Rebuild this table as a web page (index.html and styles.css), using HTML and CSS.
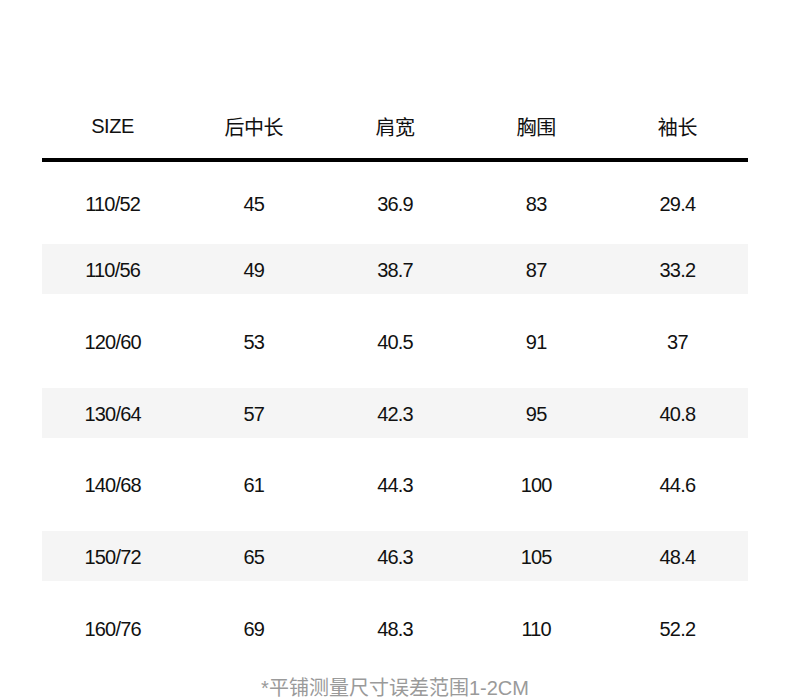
FILE: index.html
```html
<!DOCTYPE html>
<html lang="zh-CN">
<head>
<meta charset="utf-8">
<title>尺码表</title>
<link rel="stylesheet" href="styles.css">
</head>
<body>
<div class="page">
  <div class="table">
    <div class="row head">
      <div class="cell">SIZE</div>
      <div class="cell">后中长</div>
      <div class="cell">肩宽</div>
      <div class="cell">胸围</div>
      <div class="cell">袖长</div>
    </div>
    <div class="row first">
      <div class="cell">110/52</div><div class="cell">45</div><div class="cell">36.9</div><div class="cell">83</div><div class="cell">29.4</div>
    </div>
    <div class="row alt">
      <div class="cell">110/56</div><div class="cell">49</div><div class="cell">38.7</div><div class="cell">87</div><div class="cell">33.2</div>
    </div>
    <div class="row">
      <div class="cell">120/60</div><div class="cell">53</div><div class="cell">40.5</div><div class="cell">91</div><div class="cell">37</div>
    </div>
    <div class="row alt">
      <div class="cell">130/64</div><div class="cell">57</div><div class="cell">42.3</div><div class="cell">95</div><div class="cell">40.8</div>
    </div>
    <div class="row">
      <div class="cell">140/68</div><div class="cell">61</div><div class="cell">44.3</div><div class="cell">100</div><div class="cell">44.6</div>
    </div>
    <div class="row alt">
      <div class="cell">150/72</div><div class="cell">65</div><div class="cell">46.3</div><div class="cell">105</div><div class="cell">48.4</div>
    </div>
    <div class="row">
      <div class="cell">160/76</div><div class="cell">69</div><div class="cell">48.3</div><div class="cell">110</div><div class="cell">52.2</div>
    </div>
  </div>
  <p class="note">*平铺测量尺寸误差范围1-2CM</p>
</div>
</body>
</html>
```

FILE: styles.css
```css
html, body {
  margin: 0;
  padding: 0;
  background: #ffffff;
}
body {
  font-family: "Liberation Sans", "Noto Sans CJK SC", sans-serif;
  color: #111111;
}
.page {
  width: 790px;
  height: 700px;
  overflow: hidden;
  padding: 94px 42px 0;
  box-sizing: border-box;
}
.table {
  display: flex;
  flex-direction: column;
}
.row {
  display: grid;
  grid-template-columns: repeat(5, 1fr);
  align-items: center;
  height: 93.5px;
  font-size: 20px;
  letter-spacing: -0.8px;
}
.cell {
  text-align: center;
  padding-top: 3px;
}
.row.head {
  height: 64px;
  font-size: 20px;
  letter-spacing: -0.4px;
  border-bottom: 4px solid #000000;
}
.row.head .cell {
  padding-top: 0;
}
.row.first {
  height: 82px;
}
.row.alt {
  height: 50px;
  background: #f5f5f5;
}
.note {
  margin: 1px 0 0;
  text-align: center;
  font-size: 20px;
  line-height: 24px;
  color: #9a9a9a;
  letter-spacing: 0;
}
```
